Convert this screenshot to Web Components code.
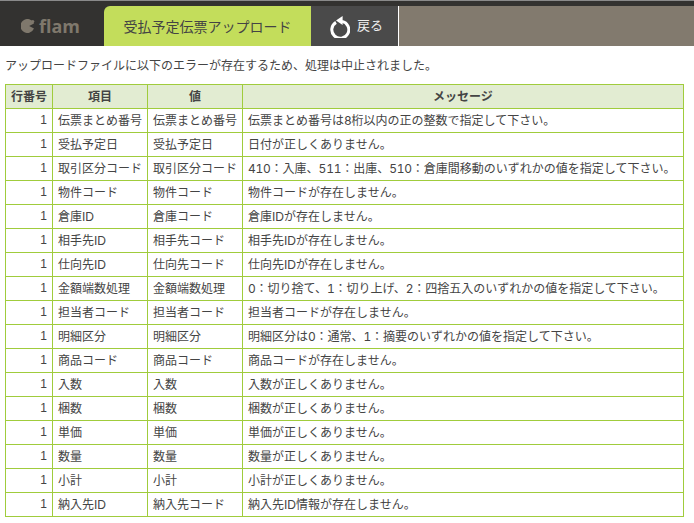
<!DOCTYPE html>
<html lang="ja">
<head>
<meta charset="utf-8">
<title>受払予定伝票アップロード</title>
<style>
    html, body { margin: 0; padding: 0; background: #fff; }
    body { font-family: "Liberation Sans", "Noto Sans CJK JP", sans-serif; font-size: 12px; color: #444; }
</style>
</head>
<body>
<flam-header>
    <span slot="title">受払予定伝票アップロード</span>
    <span slot="back">戻る</span>
</flam-header>
<flam-errors message="アップロードファイルに以下のエラーが存在するため、処理は中止されました。"></flam-errors>

<script>
'use strict';

const ROWS = [
    ['伝票まとめ番号', '伝票まとめ番号', '伝票まとめ番号は8桁以内の正の整数で指定して下さい。'],
    ['受払予定日', '受払予定日', '日付が正しくありません。'],
    ['取引区分コード', '取引区分コード', '410：入庫、511：出庫、510：倉庫間移動のいずれかの値を指定して下さい。'],
    ['物件コード', '物件コード', '物件コードが存在しません。'],
    ['倉庫ID', '倉庫コード', '倉庫IDが存在しません。'],
    ['相手先ID', '相手先コード', '相手先IDが存在しません。'],
    ['仕向先ID', '仕向先コード', '仕向先IDが存在しません。'],
    ['金額端数処理', '金額端数処理', '0：切り捨て、1：切り上げ、2：四捨五入のいずれかの値を指定して下さい。'],
    ['担当者コード', '担当者コード', '担当者コードが存在しません。'],
    ['明細区分', '明細区分', '明細区分は0：通常、1：摘要のいずれかの値を指定して下さい。'],
    ['商品コード', '商品コード', '商品コードが存在しません。'],
    ['入数', '入数', '入数が正しくありません。'],
    ['梱数', '梱数', '梱数が正しくありません。'],
    ['単価', '単価', '単価が正しくありません。'],
    ['数量', '数量', '数量が正しくありません。'],
    ['小計', '小計', '小計が正しくありません。'],
    ['納入先ID', '納入先コード', '納入先ID情報が存在しません。']
];

class FlamHeader extends HTMLElement {
    constructor() {
        super();
        let shadowRoot = this.attachShadow({mode: 'open'});
        shadowRoot.innerHTML = `
            <style>
                :host{
                    display: flex;
                    height: 46px;
                    box-sizing: border-box;
                    padding-top: 5px;
                    background: #333230;
                    border-top: 1px solid #8a8a8a;
                }
                .logo{
                    width: 104px;
                    display: flex;
                    align-items: center;
                    gap: 4px;
                    padding: 0 0 0 21px;
                    box-sizing: border-box;
                    color: #7f786c;
                    font: bold 18px "Open Sans", sans-serif;
                }
                .logo svg{ display: block; }
                .tab{
                    width: 207px;
                    box-sizing: border-box;
                    padding-bottom: 1px;
                    display: flex;
                    align-items: center;
                    justify-content: center;
                    background: #c3dd5b;
                    border-radius: 6px 0 0 0;
                    font-size: 14px;
                    color: #444;
                }
                .back{
                    width: 88px;
                    box-sizing: border-box;
                    padding-left: 19px;
                    display: flex;
                    align-items: center;
                    gap: 7px;
                    background: #4a4a4a;
                    color: #eee;
                    font-size: 13px;
                    border-right: 1px solid #fff;
                }
                .back svg{ display: block; }
                ::slotted([slot=back]){
                    margin-bottom: 3px;
                }
                .rest{
                    flex: 1;
                    background: #827a6e;
                }
            </style>
            <div class="logo">
                <svg width="14" height="14" viewBox="0 0 14 14"><path fill="#7f786c" d="M13 4.4A7 7 0 1 0 13 9.6L8.2 7z"/><circle cx="11.8" cy="2.6" r="1.5" fill="#7f786c"/></svg>
                <span>flam</span>
            </div>
            <div class="tab"><slot name="title"></slot></div>
            <div class="back">
                <svg width="20" height="23" viewBox="0 0 20 23"><path fill="none" stroke="#fff" stroke-width="3" d="M6 7.4a8.5 8.5 0 1 0 6-1"/><path fill="#fff" d="M12.6 1v9L6 5.5z"/></svg>
                <slot name="back"></slot>
            </div>
            <div class="rest"></div>
        `;
    }
}

class FlamErrors extends HTMLElement {
    constructor() {
        super();
        let shadowRoot = this.attachShadow({mode: 'open'});
        shadowRoot.innerHTML = `
            <style>
                :host{
                    display: block;
                    padding: 0 10px 0 5px;
                }
                p{
                    margin: 0;
                    height: 38px;
                    line-height: 40px;
                }
                table{
                    width: 679px;
                    table-layout: fixed;
                    border-collapse: collapse;
                }
                th, td{
                    height: 21px;
                    padding: 0 5px 2px;
                    border: 1px solid #a0cc3c;
                    white-space: nowrap;
                    text-align: left;
                    font-weight: normal;
                }
                th{
                    background: #e2ecd2;
                    font-weight: bold;
                    text-align: center;
                }
                .no{ text-align: right; }
                /* digits run wider in the reference than in the latin font */
                .num{
                    font-family: Inter, sans-serif;
                    font-variant-numeric: tabular-nums;
                    letter-spacing: -.25px;
                }
            </style>
            <p></p>
            <table>
                <colgroup><col style="width:47px"><col style="width:95px"><col style="width:95px"><col></colgroup>
                <thead><tr><th>行番号</th><th>項目</th><th>値</th><th>メッセージ</th></tr></thead>
                <tbody></tbody>
            </table>
        `;
    }

    connectedCallback() {
        this.shadowRoot.querySelector('p').textContent = this.getAttribute('message');
        let tbody = this.shadowRoot.querySelector('tbody');
        ROWS.forEach(function(row){
            let tr = document.createElement('tr');
            let no = document.createElement('td');
            no.className = 'no';
            no.textContent = '1';
            tr.appendChild(no);
            row.forEach(function(text){
                let td = document.createElement('td');
                this._fillCell(td, text);
                tr.appendChild(td);
            }, this);
            tbody.appendChild(tr);
        }, this);
    }

    /**
     * put text in a cell, digits in their own span
     */
    _fillCell(td, text){
        text.split(/(\d+)/).forEach(function(part){
            if(/^\d+$/.test(part)){
                let num = document.createElement('span');
                num.className = 'num';
                num.textContent = part;
                td.appendChild(num);
            }else if(part){
                td.appendChild(document.createTextNode(part));
            }
        });
    }
}

customElements.define('flam-header', FlamHeader);
customElements.define('flam-errors', FlamErrors);
</script>
</body>
</html>
